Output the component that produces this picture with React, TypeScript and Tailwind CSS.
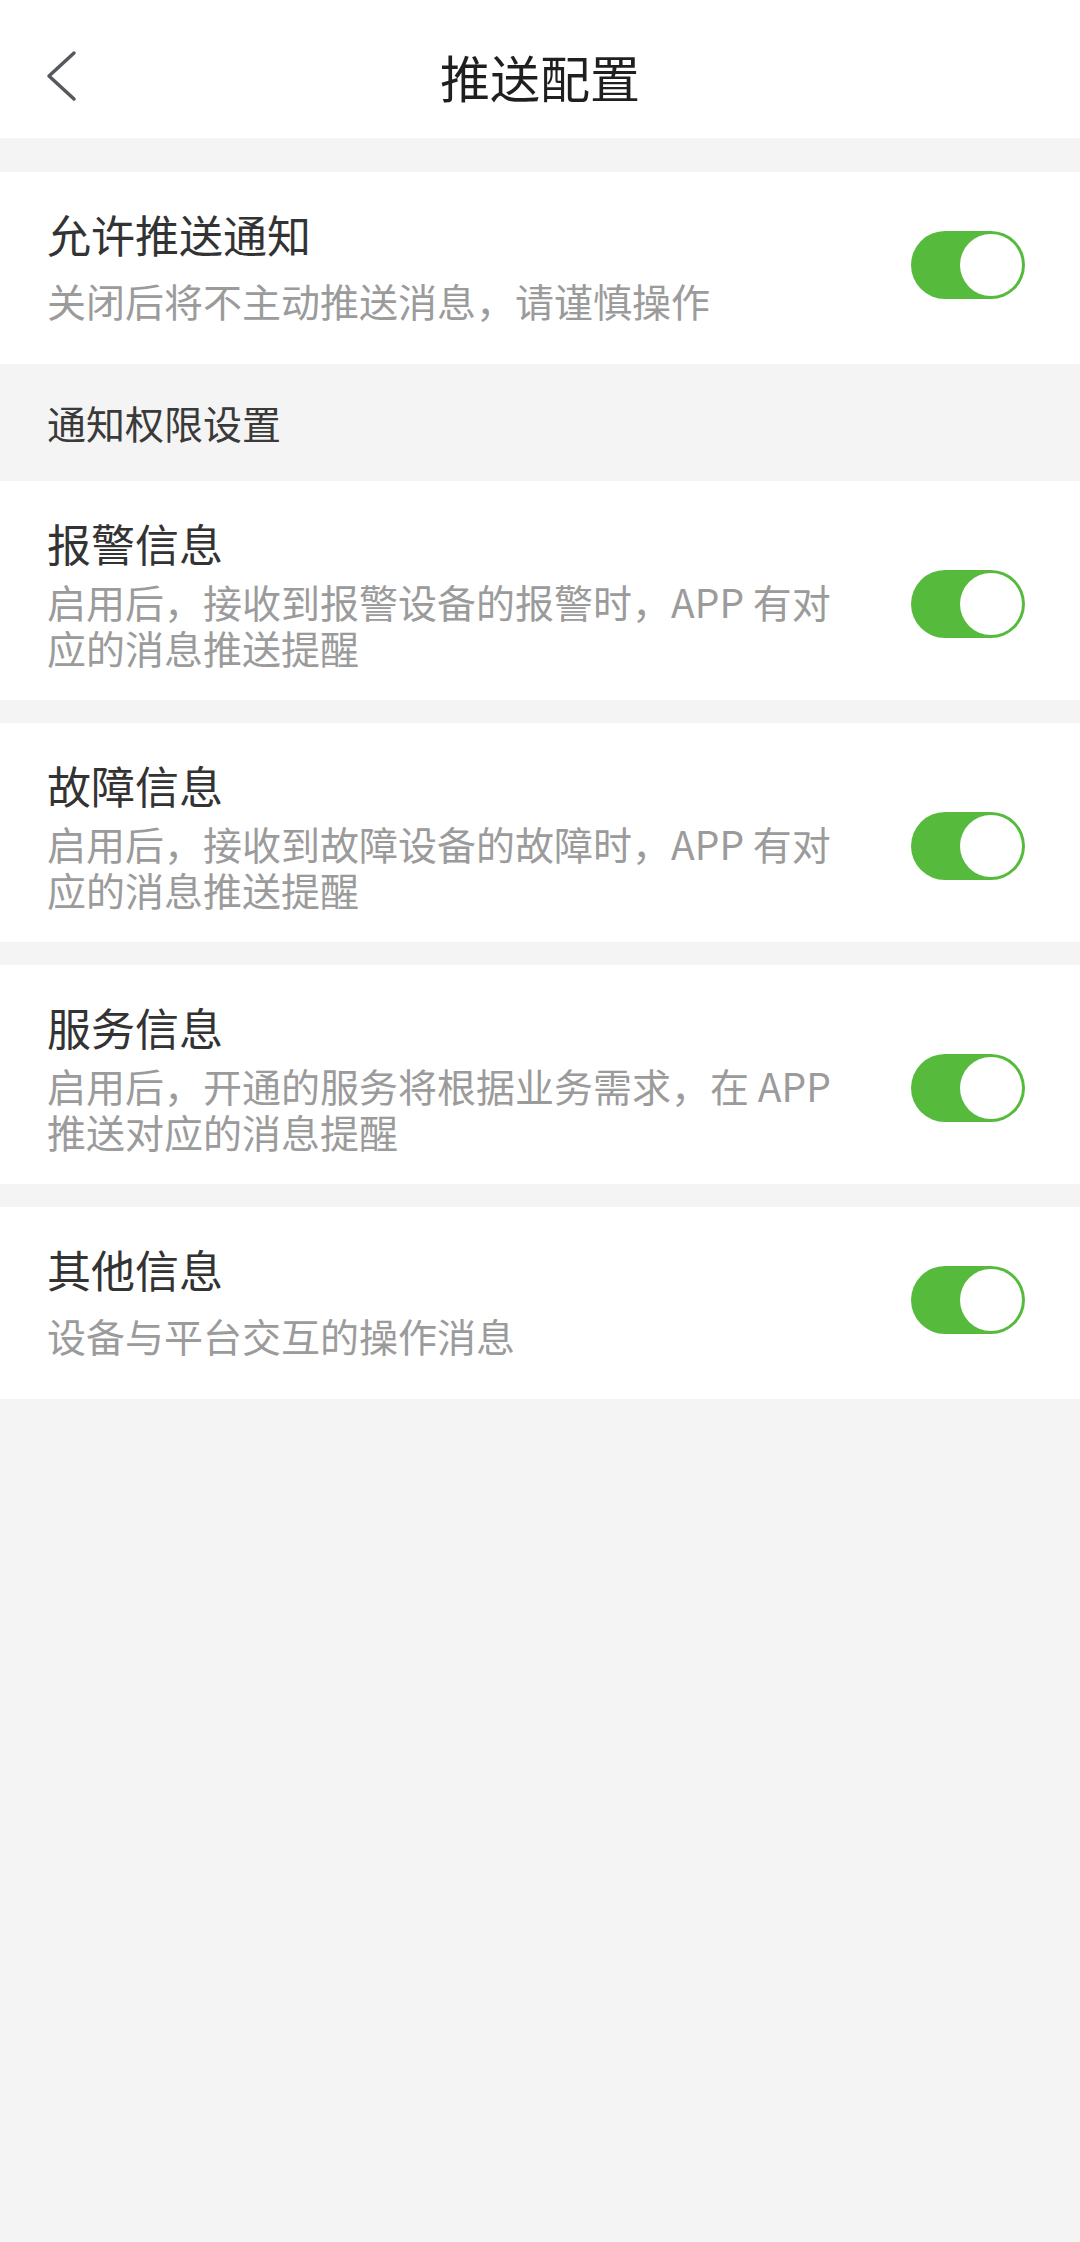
import React, { useState } from "react";

const font = { fontFamily: '"Noto Sans CJK SC", "Noto Sans", sans-serif' };

interface Item {
  key: string;
  title: string;
  lines: string[];
}

const items: Item[] = [
  {
    key: "alarm",
    title: "报警信息",
    lines: ["启用后，接收到报警设备的报警时，APP 有对", "应的消息推送提醒"],
  },
  {
    key: "fault",
    title: "故障信息",
    lines: ["启用后，接收到故障设备的故障时，APP 有对", "应的消息推送提醒"],
  },
  {
    key: "service",
    title: "服务信息",
    lines: ["启用后，开通的服务将根据业务需求，在 APP", "推送对应的消息提醒"],
  },
  {
    key: "other",
    title: "其他信息",
    lines: ["设备与平台交互的操作消息"],
  },
];

function Toggle({ on, onChange, offset }: { on: boolean; onChange: () => void; offset?: boolean }) {
  return (
    <button
      onClick={onChange}
      className={`flex h-[68px] w-[114px] shrink-0 items-center rounded-full p-[3px] ${
        on ? "justify-end bg-[#56bb3d]" : "justify-start bg-[#e3e3e3]"
      } ${offset ? "mt-[22px]" : ""}`}
    >
      <span className="block h-[62px] w-[62px] rounded-full bg-white" />
    </button>
  );
}

function Row({
  title,
  lines,
  on,
  onChange,
}: {
  title: string;
  lines: string[];
  on: boolean;
  onChange: () => void;
}) {
  const multi = lines.length > 1;
  return (
    <div
      className={`flex items-center justify-between bg-white pl-[47px] pr-[55px] pt-[34px] ${
        multi ? "pb-[30px]" : "pb-[41px]"
      }`}
    >
      <div className="min-w-0">
        <div className="text-[44px] leading-[56px] text-[#333333]">{title}</div>
        <div className={`text-[39px] leading-[46px] text-[#9b9b9b] ${multi ? "mt-[7px]" : "mt-[15px]"}`}>
          {lines.map((line) => (
            <div key={line} className="whitespace-nowrap">
              {line}
            </div>
          ))}
        </div>
      </div>
      <Toggle on={on} onChange={onChange} offset={multi} />
    </div>
  );
}

export default function App() {
  const [allow, setAllow] = useState(true);
  const [enabled, setEnabled] = useState<Record<string, boolean>>({
    alarm: true,
    fault: true,
    service: true,
    other: true,
  });

  return (
    <div className="min-h-screen bg-[#f4f4f4]" style={font}>
      <header className="grid h-[138px] grid-cols-[1fr_auto_1fr] items-center bg-white pt-[14px]">
        <button className="flex items-center pl-[46px]">
          <svg width="32" height="52" viewBox="0 0 32 52" fill="none">
            <path
              d="M28 3 L3 26 L28 49"
              stroke="#55585e"
              strokeWidth="3.5"
              strokeLinecap="round"
              strokeLinejoin="round"
            />
          </svg>
        </button>
        <h1 className="text-[50px] leading-none text-[#1f1f1f]">推送配置</h1>
        <div />
      </header>

      <div className="mt-[34px]">
        <Row
          title="允许推送通知"
          lines={["关闭后将不主动推送消息，请谨慎操作"]}
          on={allow}
          onChange={() => setAllow(!allow)}
        />
      </div>

      <div className="flex h-[117px] items-center pl-[47px] text-[39px] text-[#3a3a3a]">通知权限设置</div>

      <div className="flex flex-col gap-[23px]">
        {items.map((item) => (
          <Row
            key={item.key}
            title={item.title}
            lines={item.lines}
            on={enabled[item.key]}
            onChange={() => setEnabled({ ...enabled, [item.key]: !enabled[item.key] })}
          />
        ))}
      </div>
    </div>
  );
}
